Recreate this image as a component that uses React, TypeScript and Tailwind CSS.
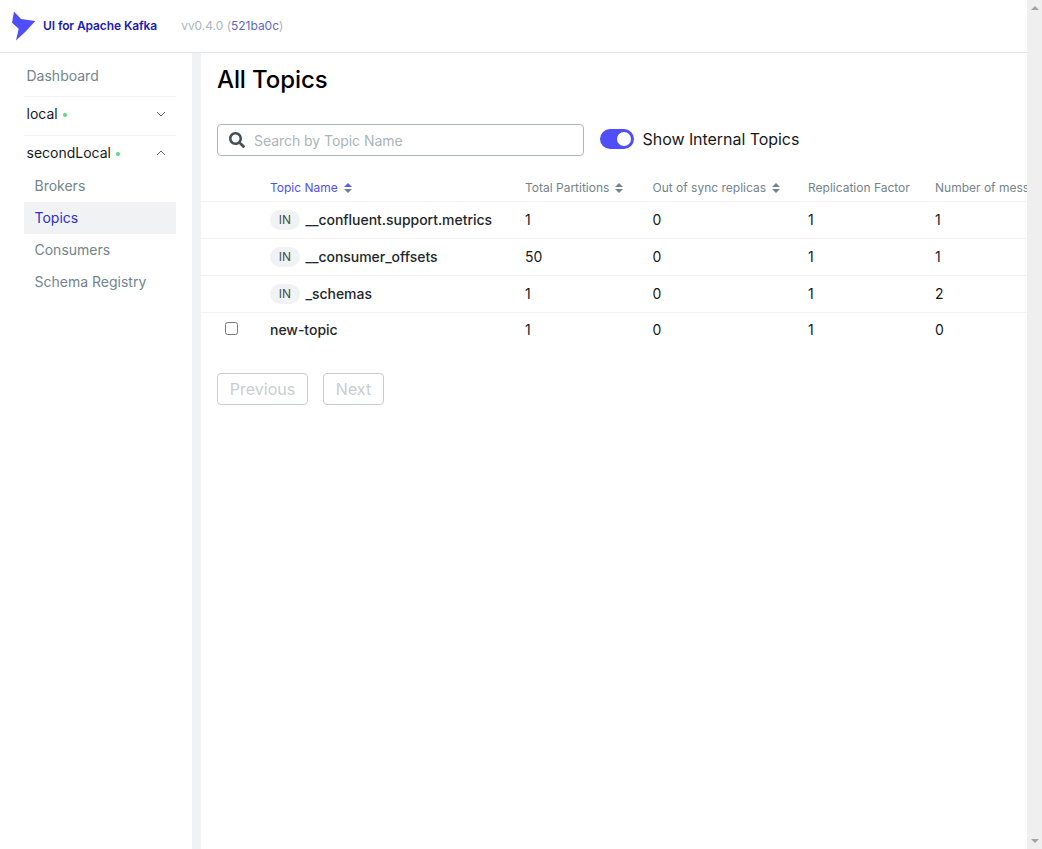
const SortIcon = ({ active }: { active?: boolean }) => (
  <svg width="8" height="10" viewBox="0 0 8 10" className="ml-[6px] shrink-0">
    <path d="M4 0 L8 4 H0 Z" fill={active ? '#5c5cf0' : '#73848c'} />
    <path d="M0 6 H8 L4 10 Z" fill="#73848c" />
  </svg>
);

const Logo = () => (
  <svg width="24" height="30" viewBox="0 0 24 30">
    <path d="M2 0.500 L9 8 L23.300 10 Q14 21 4 29.500 L6.700 17.700 L0 11.700 Z" fill="#4f4ffa" />
  </svg>
);

const SearchIcon = () => (
  <svg width="16" height="16" viewBox="0 0 512 512" className="shrink-0">
    <path
      fill="#454f54"
      d="M505 442.700L405.300 343c-4.500-4.500-10.600-7-17-7H372c27.600-35.300 44-79.700 44-128C416 93.100 322.900 0 208 0S0 93.100 0 208s93.100 208 208 208c48.300 0 92.700-16.400 128-44v16.300c0 6.400 2.500 12.500 7 17l99.700 99.700c9.400 9.400 24.600 9.400 33.900 0l28.300-28.300c9.400-9.400 9.400-24.600.1-34zM208 336c-70.700 0-128-57.200-128-128 0-70.700 57.200-128 128-128 70.700 0 128 57.200 128 128 0 70.700-57.200 128-128 128z"
    />
  </svg>
);

const rows = [
  { name: '__confluent.support.metrics', internal: true, partitions: 1, outOfSync: 0, replication: 1, messages: 1 },
  { name: '__consumer_offsets', internal: true, partitions: 50, outOfSync: 0, replication: 1, messages: 1 },
  { name: '_schemas', internal: true, partitions: 1, outOfSync: 0, replication: 1, messages: 2 },
  { name: 'new-topic', internal: false, partitions: 1, outOfSync: 0, replication: 1, messages: 0 },
];

const ClusterRow = ({ name, open }: { name: string; open?: boolean }) => (
  <div className="flex h-[38px] items-center justify-between pb-[4px] pl-[2.500px] pr-[10px] text-[#171a1c]">
    <div className="flex items-center">
      <span>{name}</span>
      <span className="ml-[5px] mt-[1px] h-[4px] w-[4px] rounded-full bg-[#5ad882]" />
    </div>
    <svg width="10" height="6" viewBox="0 0 10 6" fill="none" stroke="#5c6970" strokeWidth="1">
      <path d={open ? 'M1 5 L5 1 L9 5' : 'M1 1 L5 5 L9 1'} />
    </svg>
  </div>
);

export default function App() {
  return (
    <div className="flex h-[849px] overflow-hidden bg-white font-['Inter',sans-serif] text-[14px] leading-[20px]">
      <div className="flex min-w-0 flex-1 flex-col">
        <header className="flex h-[53px] shrink-0 items-center border-b border-[#e3e6e8] pl-[12px]">
          <Logo />
          <span className="ml-[7px] text-[12px] font-semibold tracking-[-0.1px] text-[#1b1bb5]">UI for Apache Kafka</span>
          <span className="ml-[24px] text-[12px] tracking-[-0.02px] text-[#abb5ba]">
            vv0.4.0 (<span className="text-[#5b67c7]">521ba0c</span>)
          </span>
        </header>
        <div className="flex min-h-0 flex-1">
          <aside className="w-[192px] shrink-0 pl-[24px] pr-[16px] pt-[8px]">
            <div className="flex h-[36px] items-center border-b border-[#f1f2f3] pb-[6px] pl-[2.500px] text-[#73848c]">Dashboard</div>
            <div className="border-b border-[#f1f2f3]">
              <ClusterRow name="local" />
            </div>
            <ClusterRow name="secondLocal" open />
            <div className="mt-[-4px] text-[#73848c]">
              <div className="flex h-[32px] items-center pl-[10.500px]">Brokers</div>
              <div className="flex h-[32px] items-center bg-[#f1f2f3] pl-[10.500px] text-[#2f2fc8]">Topics</div>
              <div className="flex h-[32px] items-center pl-[10.500px]">Consumers</div>
              <div className="flex h-[32px] items-center pl-[10.500px]">Schema Registry</div>
            </div>
          </aside>
          <div className="w-[9px] shrink-0 bg-[#f1f2f3]" />
          <main className="min-w-0 flex-1 overflow-hidden">
            <h1 className="ml-[16px] mt-[11px] text-[24px] font-medium leading-[32px] tracking-[-0.1px] text-black">All Topics</h1>
            <div className="ml-[16px] mt-[28px] flex items-center">
              <div className="flex h-[32px] w-[367px] items-center rounded-[4px] border border-[#abb5ba] pl-[11px]">
                <SearchIcon />
                <span className="ml-[9px] pt-[1px] tracking-[-0.05px] text-[#abb5ba]">Search by Topic Name</span>
              </div>
              <div className="ml-[16px] mt-[-2px] flex h-[20px] w-[34px] items-center justify-end rounded-full bg-[#4f4ffa] pr-[3px]">
                <div className="h-[14px] w-[14px] rounded-full bg-white" />
              </div>
              <span className="ml-[8.500px] mt-[-2px] text-[16px] leading-[24px] tracking-[-0.05px] text-[#171a1c]">Show Internal Topics</span>
            </div>
            <div className="mt-[20px] w-[900px]">
              <div className="grid h-[26px] grid-cols-[69px_255px_127.500px_155.500px_127px_1fr] items-start border-b border-[#f1f2f3] pt-[4px] text-[12px] leading-[16px] text-[#73848c]">
                <div />
                <div className="flex items-center text-[#4f4ffa]">
                  Topic Name
                  <SortIcon active />
                </div>
                <div className="flex items-center">
                  Total Partitions
                  <SortIcon />
                </div>
                <div className="flex items-center">
                  Out of sync replicas
                  <SortIcon />
                </div>
                <div>Replication Factor</div>
                <div className="whitespace-nowrap">Number of messages</div>
              </div>
              {rows.map((row, i) => (
                <div
                  key={row.name}
                  className={`grid grid-cols-[69px_255px_127.500px_155.500px_127px_1fr] items-center text-[#171a1c] ${
                    i < rows.length - 1 ? 'h-[37px] border-b border-[#f1f2f3]' : 'h-[33px]'
                  }`}
                >
                  <div className="flex pl-[24px]">
                    {!row.internal && (
                      <div className="mt-[-2px] h-[13px] w-[13px] rounded-[2.500px] border border-[#767676] bg-white" />
                    )}
                  </div>
                  <div className="flex items-center">
                    {row.internal && (
                      <span className="mr-[5.500px] flex h-[20px] w-[30px] items-center justify-center rounded-full bg-[#f1f2f3] text-[12px] text-[#454f54]">
                        IN
                      </span>
                    )}
                    <span className={`font-medium tracking-[-0.03px] text-[#22272a] ${row.internal ? 'mt-[-1px]' : ''}`}>{row.name}</span>
                  </div>
                  <div>{row.partitions}</div>
                  <div>{row.outOfSync}</div>
                  <div>{row.replication}</div>
                  <div>{row.messages}</div>
                </div>
              ))}
            </div>
            <div className="ml-[16px] mt-[27px] flex gap-[15px] text-[16px] text-[#c7ced1]">
              <div className="flex h-[32px] w-[91px] items-center justify-center rounded-[4px] border border-[#c7ced1]">Previous</div>
              <div className="flex h-[32px] w-[61px] items-center justify-center rounded-[4px] border border-[#c7ced1]">Next</div>
            </div>
          </main>
        </div>
      </div>
      <div className="flex w-[15px] shrink-0 flex-col items-center justify-between bg-[#efefef] py-[6px]">
        <div className="h-0 w-0 border-x-[4px] border-b-[4px] border-x-transparent border-b-[#a3a3a3]" />
        <div className="h-0 w-0 border-x-[4px] border-t-[4px] border-x-transparent border-t-[#a3a3a3]" />
      </div>
    </div>
  );
}
